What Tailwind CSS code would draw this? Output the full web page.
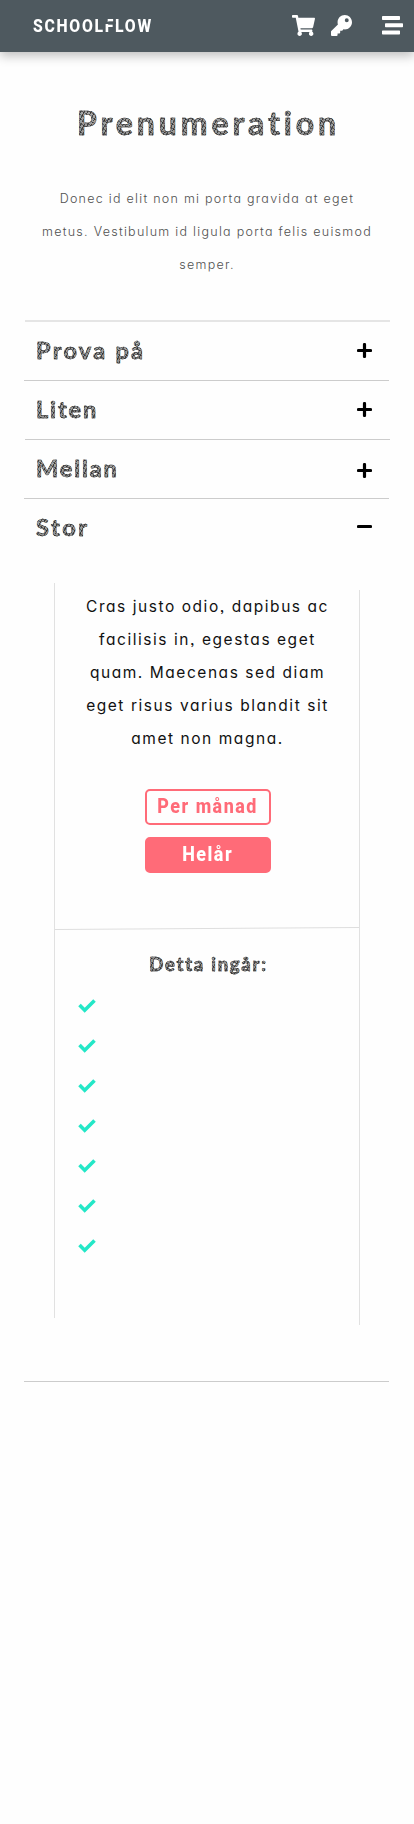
<!DOCTYPE html>
<html lang="sv">
<head>
<meta charset="utf-8">
<meta name="viewport" content="width=device-width, initial-scale=1">
<title>Schoolflow – Prenumeration</title>
<script src="https://cdn.jsdelivr.net/npm/@tailwindcss/browser@4"></script>
<style>
.sketch{color:transparent;background-image:repeating-linear-gradient(118deg,rgba(30,30,30,.7) 0 .8px,transparent .8px 3.1px),repeating-linear-gradient(32deg,rgba(30,30,30,.5) 0 .9px,transparent .9px 3.7px),linear-gradient(#b4b4b4,#8a8a8a);-webkit-background-clip:text;background-clip:text;-webkit-text-stroke:.45px #2c2c2c}
.round{font-feature-settings:"cv11","ss03"}
</style>
</head>
<body class="bg-white font-['Inter','Noto_Sans',sans-serif]">
<div class="h-[1824px] w-[414px] overflow-hidden bg-[#fefefe]">
<header class="flex h-[52px] items-center bg-[#4e595f] pl-[33px] shadow-[0_4px_10px_rgba(0,0,0,0.25)]">
  <div class="w-[259px]"><span class="inline-block origin-left scale-x-90 font-['Roboto'] text-[17.5px] leading-[20px] font-extrabold tracking-[1.9px] whitespace-nowrap text-white">SCHOOL<span class="relative">F<span class="absolute top-[6px] left-0 h-[2px] w-[12px] bg-[#4e595f]"></span><span class="absolute top-[3px] left-0 h-[5px] w-[3px] bg-[#4e595f]"></span></span>LOW</span></div>
  <svg class="mb-[2px] h-[21px] w-[23px] fill-white" viewBox="0 0 576 512" preserveAspectRatio="none"><path d="M528.12 301.32l47.27-208C578.81 78.3 567.39 64 551.99 64H159.21l-9.17-44.8C147.76 8.02 137.92 0 126.53 0H24C10.75 0 0 10.75 0 24v16c0 13.25 10.75 24 24 24h69.88l70.25 343.43C147.32 417.1 136 435.22 136 456c0 30.93 25.07 56 56 56s56-25.07 56-56c0-15.67-6.45-29.83-16.82-40h209.64C430.45 426.17 424 440.33 424 456c0 30.93 25.07 56 56 56s56-25.07 56-56c0-22.17-12.89-41.33-31.58-50.41l5.52-24.28c3.42-15.02-8-29.31-23.4-29.31H218.12l-6.55-32h293.15c11.21 0 20.92-7.75 23.4-18.68z"/></svg>
  <svg class="mb-[2px] ml-[16px] h-[21px] w-[21px] fill-white" viewBox="0 0 512 512"><path d="M512 176c0 97.2-78.8 176-176 176-11.22 0-22.19-1.06-32.83-3.07l-24 27A24 24 0 0 1 261.22 384H224v40a24 24 0 0 1-24 24h-40v40a24 24 0 0 1-24 24H24a24 24 0 0 1-24-24v-78.06a24 24 0 0 1 7.03-16.97l161.8-161.8A175.9 175.9 0 0 1 160 176C160 78.8 238.8 0 336 0s176 78.8 176 176zM336 128a48 48 0 1 0 96 0 48 48 0 0 0-96 0z"/></svg>
  <svg class="mb-px ml-[30px] h-[19px] w-[21px] fill-white" viewBox="0 0 21 19"><rect width="18" height="4" rx=".7"/><rect x="3" y="7.2" width="18" height="4" rx=".7"/><rect y="14.4" width="18" height="4" rx=".7"/></svg>
</header>
<main>
  <h1 class="mt-[46px] flex h-[50px] items-center justify-center pl-[3px] whitespace-nowrap"><span class="sketch font-['Lato'] text-[32px] leading-[50px] font-bold tracking-[3.9px]">Prenumeration</span></h1>
  <p class="round mt-[34px] text-center text-[12.5px] leading-[33px] font-light tracking-[1.27px] whitespace-nowrap text-[#505050]">Donec id elit non mi porta gravida at eget<br>metus. Vestibulum id ligula porta felis euismod<br>semper.</p>
  <section class="mx-[24px] mt-[39px] w-[366px] font-['Lato'] text-[23.5px] font-bold">
    <div class="ml-px flex h-[60px] items-center justify-between border-t-2 border-[#e5e5e5] pr-[18px] pl-[11px]"><h2 class="sketch tracking-[2.3px]">Prova på</h2><svg class="mb-px size-[15px]" viewBox="0 0 15 15"><path d="M7.5 1.5v12M1.5 7.5h12" stroke="#000" stroke-width="3.2" stroke-linecap="round"/></svg></div>
    <div class="mr-px flex h-[59px] items-center justify-between border-t border-[#ccc] pr-[17px] pl-[12px]"><h2 class="sketch tracking-[1.9px]">Liten</h2><svg class="mb-px size-[15px]" viewBox="0 0 15 15"><path d="M7.5 1.5v12M1.5 7.5h12" stroke="#000" stroke-width="3.2" stroke-linecap="round"/></svg></div>
    <div class="ml-px flex h-[59px] items-center justify-between border-t border-[#ccc] pr-[18px] pl-[11px]"><h2 class="sketch tracking-[1.9px]">Mellan</h2><svg class="mt-[3px] size-[15px]" viewBox="0 0 15 15"><path d="M7.5 1.5v12M1.5 7.5h12" stroke="#000" stroke-width="3.2" stroke-linecap="round"/></svg></div>
    <div class="mr-px flex h-[59px] items-center justify-between border-t border-[#ccc] pr-[17px] pl-[12px]"><h2 class="sketch tracking-[2.6px]">Stor</h2><svg class="mb-[3px] size-[15px]" viewBox="0 0 15 15"><path d="M1.5 7.5h12" stroke="#000" stroke-width="3.2" stroke-linecap="round"/></svg></div>
  </section>
  <section class="mt-[26px] ml-[54px] flex h-[742px] w-[306px]">
    <div class="h-[735px] w-px bg-[#e1e1e1]"></div>
    <div class="flex w-[304px] flex-col items-center pt-[7px]">
      <p class="round pl-px text-center text-[15.5px] leading-[33px] tracking-[1.55px] whitespace-nowrap text-[#111]">Cras justo odio, dapibus ac<br>facilisis in, egestas eget<br>quam. Maecenas sed diam<br>eget risus varius blandit sit<br>amet non magna.</p>
      <button class="mt-[34px] ml-[2px] h-[36px] w-[126px] rounded-[5px] border-2 border-[#ff6b78] font-['Roboto'] text-[19.5px] leading-[32px] font-extrabold tracking-[1.6px] whitespace-nowrap text-[#ff6b78]"><span class="-mx-2 inline-block scale-x-[.92]">Per månad</span></button>
      <button class="mt-[12px] ml-[2px] h-[36px] w-[126px] rounded-[5px] border-2 border-[#ff6b78] bg-[#ff6b78] font-['Roboto'] text-[19.5px] leading-[32px] font-extrabold tracking-[1.6px] text-white"><span class="inline-block scale-x-[.92]">Helår</span></button>
      <svg class="mt-[54px] h-[4px] w-[304px]" viewBox="0 0 304 4"><path d="M0 2.5L304 .5" stroke="#dedede" stroke-width="1"/></svg>
      <h3 class="sketch mt-[18px] ml-[3px] font-['Lato'] text-[18.5px] leading-[30px] font-bold tracking-[1.75px] [-webkit-text-stroke-width:.3px]">Detta ingår:</h3>
      <ul class="mt-[7px] w-full pl-[23px]">
        <li class="flex h-[40px] items-center"><svg class="h-[14px] w-[18px]" viewBox="0 0 18 14"><path d="M1.5 6l5.2 5.2L16.5 1.5" fill="none" stroke="#23e7c7" stroke-width="3.6"/></svg></li>
        <li class="flex h-[40px] items-center"><svg class="h-[14px] w-[18px]" viewBox="0 0 18 14"><path d="M1.5 6l5.2 5.2L16.5 1.5" fill="none" stroke="#23e7c7" stroke-width="3.6"/></svg></li>
        <li class="flex h-[40px] items-center"><svg class="h-[14px] w-[18px]" viewBox="0 0 18 14"><path d="M1.5 6l5.2 5.2L16.5 1.5" fill="none" stroke="#23e7c7" stroke-width="3.6"/></svg></li>
        <li class="flex h-[40px] items-center"><svg class="h-[14px] w-[18px]" viewBox="0 0 18 14"><path d="M1.5 6l5.2 5.2L16.5 1.5" fill="none" stroke="#23e7c7" stroke-width="3.6"/></svg></li>
        <li class="flex h-[40px] items-center"><svg class="h-[14px] w-[18px]" viewBox="0 0 18 14"><path d="M1.5 6l5.2 5.2L16.5 1.5" fill="none" stroke="#23e7c7" stroke-width="3.6"/></svg></li>
        <li class="flex h-[40px] items-center"><svg class="h-[14px] w-[18px]" viewBox="0 0 18 14"><path d="M1.5 6l5.2 5.2L16.5 1.5" fill="none" stroke="#23e7c7" stroke-width="3.6"/></svg></li>
        <li class="flex h-[40px] items-center"><svg class="h-[14px] w-[18px]" viewBox="0 0 18 14"><path d="M1.5 6l5.2 5.2L16.5 1.5" fill="none" stroke="#23e7c7" stroke-width="3.6"/></svg></li>
      </ul>
    </div>
    <div class="mt-[7px] h-[735px] w-px bg-[#e1e1e1]"></div>
  </section>
  <div class="mt-[56px] ml-[24px] h-px w-[365px] bg-[#ccc]"></div>
</main>
</div>
</body>
</html>
